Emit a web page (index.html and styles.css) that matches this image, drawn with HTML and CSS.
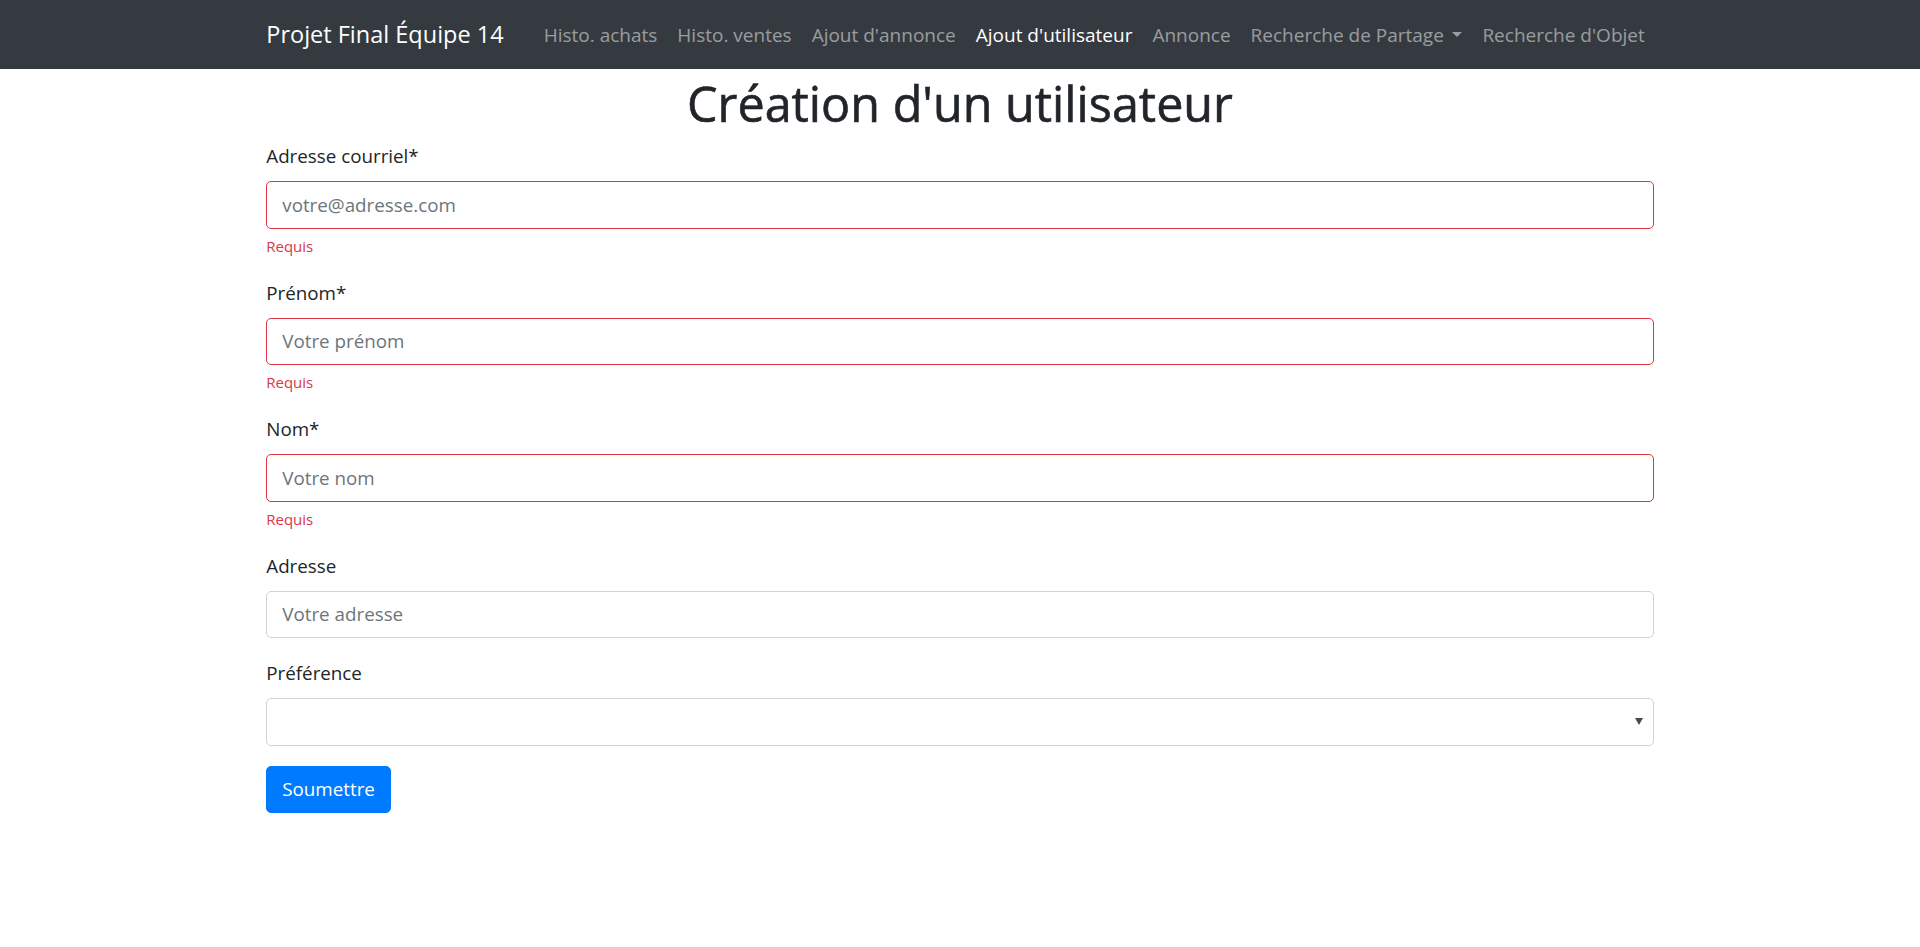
FILE: index.html
```html
<!DOCTYPE html>
<html lang="fr">
<head>
<meta charset="utf-8">
<title>Création d'un utilisateur</title>
<link rel="stylesheet" href="styles.css">
</head>
<body>
<nav class="navbar">
  <div class="container navbar-inner">
    <a class="brand" href="#">Projet Final Équipe 14</a>
    <ul class="nav-list">
      <li><a class="nav-link" href="#">Histo. achats</a></li>
      <li><a class="nav-link" href="#">Histo. ventes</a></li>
      <li><a class="nav-link" href="#">Ajout d'annonce</a></li>
      <li><a class="nav-link active" href="#">Ajout d'utilisateur</a></li>
      <li><a class="nav-link" href="#">Annonce</a></li>
      <li><a class="nav-link dropdown-toggle" href="#">Recherche de Partage</a></li>
      <li><a class="nav-link" href="#">Recherche d'Objet</a></li>
    </ul>
  </div>
</nav>
<main class="container">
  <h1 class="title">Création d'un utilisateur</h1>
  <form class="user-form">
    <div class="form-group">
      <label class="form-label" for="email">Adresse courriel*</label>
      <input class="form-control is-invalid" id="email" type="email" placeholder="votre@adresse.com">
      <div class="invalid-feedback">Requis</div>
    </div>
    <div class="form-group">
      <label class="form-label" for="prenom">Prénom*</label>
      <input class="form-control is-invalid" id="prenom" type="text" placeholder="Votre prénom">
      <div class="invalid-feedback">Requis</div>
    </div>
    <div class="form-group">
      <label class="form-label" for="nom">Nom*</label>
      <input class="form-control is-invalid" id="nom" type="text" placeholder="Votre nom">
      <div class="invalid-feedback">Requis</div>
    </div>
    <div class="form-group">
      <label class="form-label" for="adresse">Adresse</label>
      <input class="form-control" id="adresse" type="text" placeholder="Votre adresse">
    </div>
    <div class="form-group">
      <label class="form-label" for="pref">Préférence</label>
      <div class="select-wrap">
        <select class="form-control form-select" id="pref">
          <option></option>
        </select>
      </div>
    </div>
    <button class="btn-primary" type="submit">Soumettre</button>
  </form>
</main>
</body>
</html>
```
FILE: styles.css
```css
body {
  margin: 0;
  font-family: "Open Sans", "Liberation Sans", sans-serif;
  font-size: 18.8px;
  line-height: 30px;
  color: #212529;
  background: #fff;
}

.container {
  max-width: 1387.5px;
  margin: 0 auto;
}

/* Navbar */
.navbar {
  background: #343a40;
  height: 69px;
  display: flex;
  align-items: center;
}

.navbar-inner {
  display: flex;
  align-items: center;
  width: 100%;
}

.brand {
  color: #fff;
  text-decoration: none;
  font-size: 23.5px;
  line-height: 37px;
  margin-right: 30px;
  white-space: nowrap;
}

.nav-list {
  display: flex;
  list-style: none;
  margin: 0;
  padding: 0;
}

.nav-link {
  display: block;
  padding: 5px 10px;
  font-size: 19px;
  line-height: 30px;
  color: rgba(255, 255, 255, 0.5);
  text-decoration: none;
  white-space: nowrap;
}

.nav-link.active {
  color: #fff;
}

.dropdown-toggle::after {
  content: "";
  display: inline-block;
  margin-left: 0.45em;
  vertical-align: 0.255em;
  border-top: 0.3em solid;
  border-right: 0.3em solid transparent;
  border-left: 0.3em solid transparent;
  border-bottom: 0;
}

/* Title */
.title {
  margin: 4px 0 8px;
  font-size: 48.5px;
  font-weight: 500;
  line-height: 60px;
  text-align: center;
  -webkit-text-stroke: 0.6px #212529;
}

/* Form */
.form-group {
  margin-bottom: 20px;
}

.form-group-plain {
  margin-bottom: 21px;
}

.form-label {
  display: inline-block;
  margin-bottom: 10px;
}

.form-control {
  display: block;
  box-sizing: border-box;
  width: 100%;
  height: 47.5px;
  padding: 7.5px 15px;
  font-family: inherit;
  font-size: 18.8px;
  line-height: 30px;
  color: #495057;
  background: #fff;
  border: 1px solid #ced4da;
  border-radius: 5px;
  outline: none;
}

.form-control::placeholder {
  color: #6c757d;
  opacity: 1;
}

.form-control.is-invalid {
  border-color: #dc3545;
}

.invalid-feedback {
  margin-top: 5px;
  font-size: 15px;
  line-height: 24px;
  color: #dc3545;
}

.select-wrap {
  position: relative;
}

.form-select {
  appearance: none;
  -webkit-appearance: none;
}

.select-wrap::after {
  content: "";
  position: absolute;
  right: 11px;
  top: 20px;
  border-top: 7px solid #4a4a4a;
  border-left: 4px solid transparent;
  border-right: 4px solid transparent;
  pointer-events: none;
}

.btn-primary {
  display: inline-block;
  height: 47.5px;
  padding: 7.5px 15px;
  font-family: inherit;
  font-size: 18.8px;
  line-height: 30px;
  color: #fff;
  background: #007bff;
  border: 1px solid #007bff;
  border-radius: 5px;
  cursor: pointer;
}
```
